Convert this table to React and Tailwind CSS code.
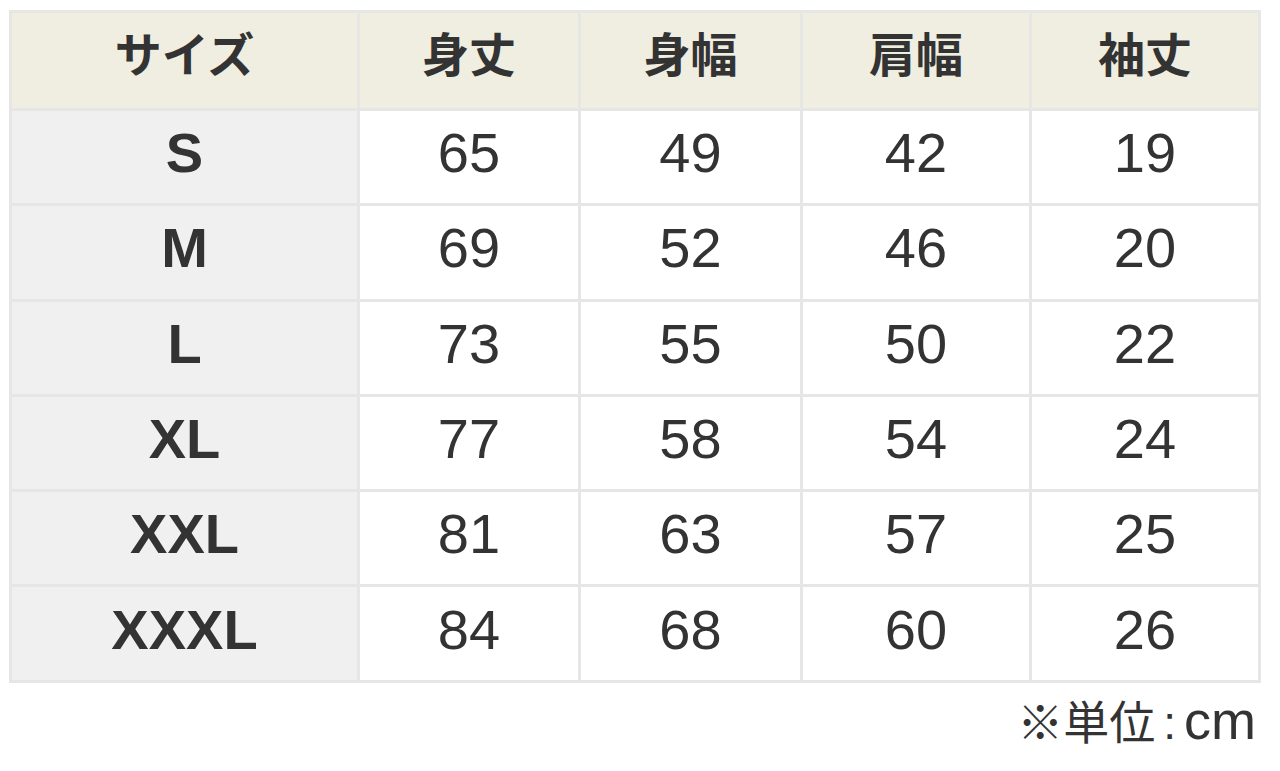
const HEADERS = ['サイズ', '身丈', '身幅', '肩幅', '袖丈'];
const ROWS = [
  ['S', 65, 49, 42, 19],
  ['M', 69, 52, 46, 20],
  ['L', 73, 55, 50, 22],
  ['XL', 77, 58, 54, 24],
  ['XXL', 81, 63, 57, 25],
  ['XXXL', 84, 68, 60, 26],
];
const WIDTHS = ['w-[348px]', 'w-[221px]', 'w-[222px]', 'w-[229px]', 'w-[229px]'];

export default function App() {
  return (
    <div className="bg-white w-[1280px] h-[771px] pt-[10px] pl-[9px] text-[#333]"
      style={{ fontFamily: '"Liberation Sans", "Noto Sans CJK JP", sans-serif' }}>
      <table className="border-collapse table-fixed w-[1249px]">
        <thead>
          <tr className="h-[98px] bg-[#efeee1]">
            {HEADERS.map((h, i) => (
              <th key={h} className={`${WIDTHS[i]} border-[3px] border-[#e6e6e4] text-center text-[47px] font-bold pb-[9px]`}>{h}</th>
            ))}
          </tr>
        </thead>
        <tbody>
          {ROWS.map((r) => (
            <tr key={r[0]} className="h-[95.3px]">
              <td className="bg-[#f0f0f0] border-[3px] border-[#e6e6e6] text-center text-[56px] font-bold pb-[8px]">{r[0]}</td>
              {r.slice(1).map((v, i) => (
                <td key={i} className="border-[3px] border-[#e6e6e6] text-center text-[56px] pb-[8px]">{v}</td>
              ))}
            </tr>
          ))}
        </tbody>
      </table>
      <div className="w-[1249px] flex justify-end items-baseline leading-none mt-[10px] pr-[2px]">
        <span className="text-[46px]">※単位</span>
        <span className="text-[46px] mx-[8px]">:</span>
        <span className="text-[54px]">cm</span>
      </div>
    </div>
  );
}
